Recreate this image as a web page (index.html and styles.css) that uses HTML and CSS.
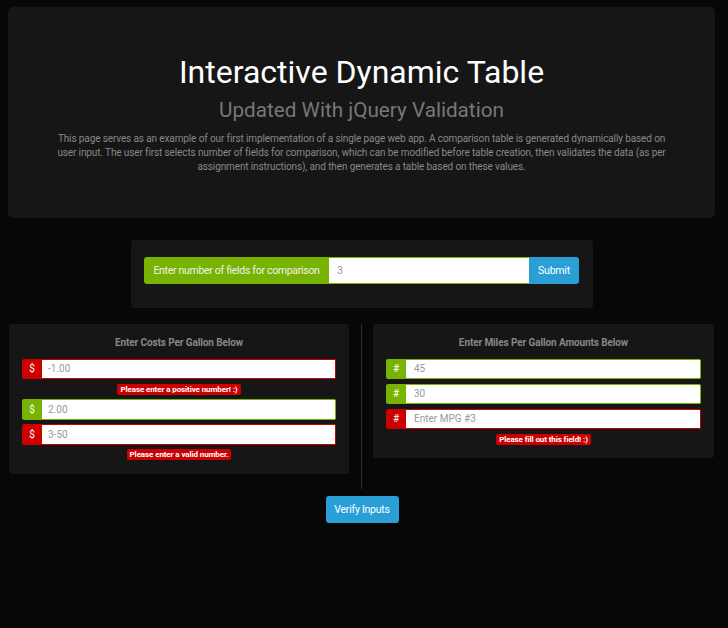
FILE: index.html
```html
<!DOCTYPE html>
<html>
<head>
<meta charset="utf-8">
<link rel="stylesheet" href="styles.css">
</head>
<body>
<div class="page">
  <header class="jumbo">
    <h1 class="title">Interactive Dynamic Table</h1>
    <h2 class="subtitle">Updated With jQuery Validation</h2>
    <p class="lead">This page serves as an example of our first implementation of a single page web app. A comparison table is generated dynamically based on user input. The user first selects number of fields for comparison, which can be modified before table creation, then validates the data (as per assignment instructions), and then generates a table based on these values.</p>
  </header>

  <section class="count-box">
    <div class="count-group">
      <span class="count-label">Enter number of fields for comparison</span>
      <span class="count-input">3</span>
      <span class="count-submit">Submit</span>
    </div>
  </section>

  <section class="row">
    <div class="col col-left">
      <div class="panel">
        <div class="panel-title">Enter Costs Per Gallon Below</div>
        <div class="field bad"><span class="addon">$</span><span class="value">-1.00</span></div>
        <div class="err-wrap"><span class="err">Please enter a positive number! :)</span></div>
        <div class="field good"><span class="addon">$</span><span class="value">2.00</span></div>
        <div class="field bad"><span class="addon">$</span><span class="value">3-50</span></div>
        <div class="err-wrap"><span class="err">Please enter a valid number.</span></div>
      </div>
    </div>
    <div class="col col-right">
      <div class="panel">
        <div class="panel-title">Enter Miles Per Gallon Amounts Below</div>
        <div class="field good"><span class="addon">#</span><span class="value">45</span></div>
        <div class="field good"><span class="addon">#</span><span class="value">30</span></div>
        <div class="field bad"><span class="addon">#</span><span class="value">Enter MPG #3</span></div>
        <div class="err-wrap"><span class="err">Please fill out this field! :)</span></div>
      </div>
    </div>
  </section>

  <div class="verify-wrap"><span class="verify">Verify Inputs</span></div>
</div>
</body>
</html>
```

FILE: styles.css
```css
* { box-sizing: border-box; }
html, body { margin: 0; padding: 0; }
body {
  background: #070707;
  font-family: Roboto, "Liberation Sans", sans-serif;
  color: #888;
  height: 628px;
  overflow: hidden;
}
.page { width: 724px; padding-top: 7px; }

.jumbo {
  margin: 0 9px 0 8px;
  height: 211px;
  background: #161616;
  border-radius: 5px;
  padding: 48px 40px 0;
  text-align: center;
}
.title {
  margin: 0;
  font-size: 32px;
  line-height: 34px;
  font-weight: 400;
  color: #fff;
}
.subtitle {
  margin: 10px 0 0;
  font-size: 20.7px;
  line-height: 22px;
  font-weight: 400;
  color: #777;
}
.lead {
  margin: 11px 0 0;
  font-size: 10px;
  letter-spacing: -0.12px;
  line-height: 14px;
  color: #888;
}

.count-box {
  margin: 22px auto 0;
  width: 462px;
  background: #161616;
  border-radius: 3px;
  padding: 17px 14px 24px 13px;
}
.count-group {
  display: flex;
  height: 27px;
  font-size: 10.5px;
}
.count-label {
  background: #77b300;
  color: #f0f0f0;
  display: flex;
  align-items: center;
  justify-content: center;
  white-space: nowrap;
  letter-spacing: -0.3px;
  width: 185px;
  border-radius: 3px 0 0 3px;
}
.count-input {
  flex: 1;
  background: #fff;
  border: 1px solid #77b300;
  border-left: none;
  border-right: none;
  color: #999;
  display: flex;
  align-items: center;
  padding-left: 8px;
}
.count-submit {
  width: 50px;
  background: #2a9fd6;
  color: #fff;
  letter-spacing: -0.2px;
  display: flex;
  align-items: center;
  justify-content: center;
  border-radius: 0 3px 3px 0;
}

.row {
  display: flex;
  align-items: stretch;
  margin-top: 16px;
  padding-left: 9px;
}
.col-left {
  width: 353px;
  padding-right: 12px;
  padding-bottom: 15px;
  border-right: 1px solid #2e2e2e;
}
.col-right {
  padding-left: 11px;
  width: 352px;
}
.panel {
  background: #161616;
  border-radius: 3px;
  padding: 13px 13px 9px 13px;
}
.panel-title {
  text-align: center;
  font-size: 10px;
  letter-spacing: -0.1px;
  font-weight: 700;
  color: #888;
  line-height: 12px;
  margin-bottom: 9.5px;
}
.field {
  display: flex;
  height: 20.5px;
  margin-bottom: 4.5px;
  font-size: 10px;
}
.addon {
  width: 20px;
  color: #fff;
  display: flex;
  align-items: center;
  justify-content: center;
  border-radius: 2px 0 0 2px;
}
.value {
  flex: 1;
  background: #fff;
  color: #999;
  display: flex;
  align-items: center;
  padding-left: 6px;
  border: 1px solid;
  border-left: none;
  border-radius: 0 2px 2px 0;
}
.bad .addon { background: #cc0000; }
.bad .value { border-color: #cc0000; }
.good .addon { background: #77b300; }
.good .value { border-color: #77b300; }
.col-right .value { padding-left: 8px; }

.err-wrap {
  display: flex;
  justify-content: center;
  margin: 0 0 4.5px;
}
.err {
  background: #cc0000;
  color: #fff;
  font-size: 8px;
  letter-spacing: -0.1px;
  font-weight: 700;
  line-height: 11px;
  padding: 0 3px;
  border-radius: 2px;
}

.verify-wrap {
  display: flex;
  justify-content: center;
  margin-top: 7px;
}
.verify {
  background: #2a9fd6;
  color: #fff;
  font-size: 10.5px;
  letter-spacing: -0.25px;
  height: 27px;
  width: 73px;
  display: flex;
  align-items: center;
  justify-content: center;
  border-radius: 3px;
}
```
